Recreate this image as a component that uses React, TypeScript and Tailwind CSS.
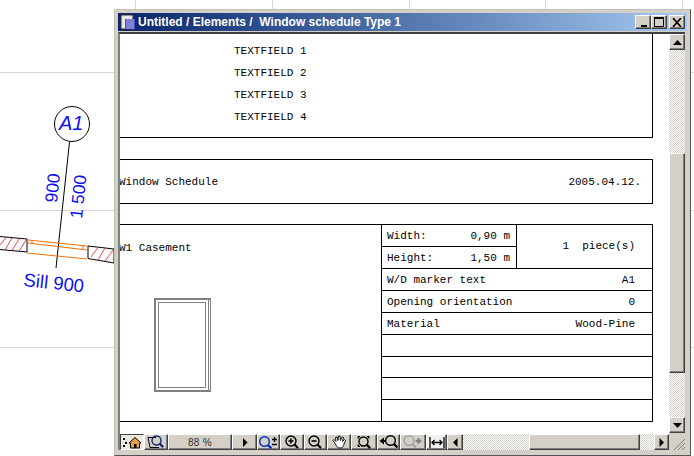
import React from "react";

const btn =
  "h-[16px] shrink-0 flex items-center justify-center bg-[#d4d0c8] border-t border-l border-t-white border-l-white border-r border-b border-r-[#404040] border-b-[#404040] shadow-[inset_-1px_-1px_0_#808080]";
const dither =
  "bg-[repeating-conic-gradient(#d4d0c8_0_25%,#ffffff_0_50%)] bg-[length:2px_2px]";

function Canvas() {
  return (
    <svg className="absolute left-0 top-0" width="694" height="456" viewBox="0 0 694 456">
      <g stroke="#d8d8d8" strokeWidth="1" shapeRendering="crispEdges">
        <path d="M0 72.5H694M0 210.5H694M0 347.5H694M135.5 0V456M272.5 0V456M409.5 0V456M545.5 0V456M682.5 0V456" />
      </g>
      <g fill="none" stroke="#000" strokeWidth="1">
        <circle cx="72" cy="124" r="17.5" fill="#fff" />
        <path d="M69.5 142L56 268" />
      </g>
      <g fill="none" stroke="#000" strokeWidth="1">
        <path d="M0 236.5L27 239V252L0 249.5M88 246L114 249V263L88 258.5V246" />
      </g>
      <g stroke="#e02020" strokeWidth="0.8">
        <path d="M0 245L6 237.5M5 250L12 238M12 250.5L19 239M19 251L26 240M91 257L98 247.5M98 260L105 248M105 261L113 250" />
      </g>
      <g stroke="#f07010" strokeWidth="1" fill="none">
        <path d="M28 240L87 246M28 243L87 250M27 253L87 259M32 240V244M83 246V250" />
      </g>
      <g fill="#1010f0" fontFamily="'Liberation Sans',sans-serif">
        <text x="59" y="130" fontSize="20" fontStyle="italic">A1</text>
        <text x="57" y="203" fontSize="17.5" transform="rotate(-84 57 203)">900</text>
        <text x="82" y="219" fontSize="17.5" transform="rotate(-84 82 219)">1 500</text>
        <text x="23" y="286" fontSize="18.5" transform="rotate(6 23 286)">Sill 900</text>
      </g>
    </svg>
  );
}

function Row({ left, right }: { left: string; right: string }) {
  return (
    <div className="h-[22px] border-b border-black flex items-center justify-between pl-[5px] pr-[17px] pt-[1px]">
      <span>{left}</span>
      <span>{right}</span>
    </div>
  );
}

function Lens({ x = 6, y = 6, r = 4.5, c = "#000" }: { x?: number; y?: number; r?: number; c?: string }) {
  return (
    <g fill="none" stroke={c} strokeWidth="1.4">
      <circle cx={x} cy={y} r={r} />
      <path d={`M${x + r * 0.7} ${y + r * 0.7}L${x + r * 0.7 + 3.5} ${y + r * 0.7 + 3.5}`} strokeWidth="2.2" />
    </g>
  );
}

function Toolbar() {
  return (
    <div className="h-[16px] shrink-0 flex items-stretch text-[11px]">
      <div className="w-[24px] h-[16px] shrink-0 flex items-center justify-center bg-[#ece9e2] border-t border-l border-t-[#404040] border-l-[#404040] border-r border-b border-r-white border-b-white">
        <svg width="20" height="13" viewBox="0 0 20 13">
          <path d="M1 2h2v2H1zM3 6h2v2H3zM1 9h2v2H1z" fill="#000" />
          <path d="M7 7L13 1.5L19 7H17.5V12H8.5V7Z" fill="#e8a040" stroke="#000" />
          <path d="M12 8h2.5v4H12z" fill="#000" />
        </svg>
      </div>
      <div className={`${btn} w-[24px]`}>
        <svg width="18" height="14" viewBox="0 0 18 14">
          <path d="M1 2.5H9M1 2.5L3 12.5H12" fill="none" stroke="#000" />
          <Lens x={9.5} y={5.5} r={4.5} c="#102a70" />
        </svg>
      </div>
      <div className={`${btn} w-[64px] text-[#303030] font-['Liberation_Sans',sans-serif] text-[10px] tracking-[0.3px]`}>88 %</div>
      <div className={`${btn} w-[25px]`}>
        <svg width="6" height="9" viewBox="0 0 6 9"><path d="M1 0L5.5 4.5L1 9Z" fill="#000" /></svg>
      </div>
      <div className={`${btn} w-[23px]`}>
        <svg width="20" height="13" viewBox="0 0 20 13">
          <Lens x={5.5} y={5.5} r={4.8} c="#0030c0" />
          <path d="M15.5 1V6M13 3.5H18M13 8.5H18" stroke="#000" strokeWidth="1.4" />
        </svg>
      </div>
      <div className={`${btn} w-[24px]`}>
        <svg width="15" height="14" viewBox="0 0 15 14">
          <Lens x={6} y={6} r={5} />
          <path d="M3.5 6H8.5M6 3.5V8.5" stroke="#000" strokeWidth="1.6" />
        </svg>
      </div>
      <div className={`${btn} w-[23px]`}>
        <svg width="15" height="14" viewBox="0 0 15 14">
          <Lens x={6} y={6} r={5} />
          <path d="M3.5 6H8.5" stroke="#000" strokeWidth="1.6" />
        </svg>
      </div>
      <div className={`${btn} w-[24px]`}>
        <svg width="15" height="14" viewBox="0 0 15 14">
          <path d="M3.5 9L1 5.5L2 4.5L4 6.5L3.5 2.5L5 2L6 5.5L6.5 1L8 1L8.5 5.5L10 2L11.5 2.5L10.5 6.5L12.5 4.5L13.5 5.5L11.5 10.5C11 12.5 10 13 8 13C5.5 13 4.5 11.5 3.5 9Z" fill="#fff" stroke="#000" strokeWidth="0.9" />
        </svg>
      </div>
      <div className={`${btn} w-[26px]`}>
        <svg width="16" height="14" viewBox="0 0 16 14">
          <Lens x={7.5} y={6.5} r={4.5} />
          <path d="M4 1.5H2V3.5M11 1.5H13V3.5M4 11.5H2V9.5" stroke="#000" />
        </svg>
      </div>
      <div className={`${btn} w-[23px]`}>
        <svg width="20" height="14" viewBox="0 0 20 14">
          <path d="M0.5 6L5 2.5V5H7V7H5V9.5Z" fill="#000" />
          <Lens x={11.5} y={5.5} r={4.8} />
        </svg>
      </div>
      <div className={`${btn} w-[26px]`}>
        <svg width="20" height="14" viewBox="0 0 20 14">
          <Lens x={6} y={5.5} r={4.8} c="#a0a0a0" />
          <path d="M19 6L14.5 2.5V5H12.5V7H14.5V9.5Z" fill="#808080" />
        </svg>
      </div>
      <div className={`${btn} w-[21px] !bg-[#f2f0ec]`}>
        <svg width="16" height="13" viewBox="0 0 16 13" fill="none" stroke="#000" strokeWidth="1.3">
          <path d="M1 1V12M15 1V12M3 6.5H13M5.5 4L3 6.5L5.5 9M10.5 4L13 6.5L10.5 9" />
        </svg>
      </div>
      <div className={`${btn} w-[16px]`}>
        <svg width="5" height="9" viewBox="0 0 5 9"><path d="M4.5 0L0 4.5L4.5 9Z" fill="#000" /></svg>
      </div>
      <div className={`flex-1 flex ${dither}`}>
        <div className="w-[66px]" />
        <div className={`${btn} w-[111px]`} />
      </div>
      <div className={`${btn} w-[15px]`}>
        <svg width="5" height="9" viewBox="0 0 5 9"><path d="M0.5 0L5 4.5L0.5 9Z" fill="#000" /></svg>
      </div>
      <div className="w-[16px] shrink-0 flex items-end justify-end bg-[#d4d0c8]">
        <svg width="14" height="14" viewBox="0 0 14 14" stroke="#808080">
          <path d="M3 14L14 3M7 14L14 7M11 14L14 11" />
        </svg>
      </div>
    </div>
  );
}

function Document() {
  return (
    <div className="flex-1 bg-white overflow-hidden relative font-['Liberation_Mono',monospace] text-[11px] leading-none text-black">
      <div className="h-[104px] w-[533px] border-r border-b border-black pl-[114px] pt-[12px] flex flex-col gap-[11px]">
        <div className="h-[11px]">TEXTFIELD 1</div>
        <div className="h-[11px]">TEXTFIELD 2</div>
        <div className="h-[11px]">TEXTFIELD 3</div>
        <div className="h-[11px]">TEXTFIELD 4</div>
      </div>
      <div className="mt-[21px] h-[45px] w-[533px] border border-l-0 border-black flex items-center justify-between pr-[11px] pt-[2px]">
        <span className="-ml-[1px]">Window Schedule</span>
        <span>2005.04.12.</span>
      </div>
      <div className="mt-[20px] h-[198px] w-[533px] border border-l-0 border-black flex">
        <div className="w-[262px] shrink-0 border-r border-black">
          <div className="mt-[18px] -ml-[1px]">W1 Casement</div>
          <div className="ml-[34px] mt-[44px] w-[57px] h-[94px] border-2 border-r-0 border-[#808080] flex">
            <div className="flex-1 my-[2px] ml-[2px] mr-[2px] border border-[#808080]" />
            <div className="w-[3px] border-l border-r border-[#808080]" />
          </div>
        </div>
        <div className="flex-1 flex flex-col">
          <div className="h-[44px] border-b border-black flex">
            <div className="w-[135px] border-r border-black">
              <div className="h-[22px] border-b border-black flex items-center justify-between px-[5px] pr-[6px] pt-[1px]">
                <span>Width:</span>
                <span>0,90 m</span>
              </div>
              <div className="h-[21px] flex items-center justify-between px-[5px] pr-[6px] pt-[1px]">
                <span>Height:</span>
                <span>1,50 m</span>
              </div>
            </div>
            <div className="flex-1 flex items-center justify-end pr-[17px] whitespace-pre">1  piece(s)</div>
          </div>
          <Row left="W/D marker text" right="A1" />
          <Row left="Opening orientation" right="0" />
          <Row left="Material" right="Wood-Pine" />
          <div className="h-[22px] border-b border-black" />
          <div className="h-[21px] border-b border-black" />
          <div className="h-[22px] border-b border-black" />
        </div>
      </div>
    </div>
  );
}

function VScroll() {
  return (
    <div className={`w-[16px] shrink-0 flex flex-col mb-[1px] ${dither}`}>
      <div className={btn}>
        <svg width="9" height="5" viewBox="0 0 9 5"><path d="M0 5L4.5 0L9 5Z" fill="#000" /></svg>
      </div>
      <div className="h-[103px]" />
      <div className={`${btn} !h-[220px]`} />
      <div className="flex-1" />
      <div className={btn}>
        <svg width="9" height="5" viewBox="0 0 9 5"><path d="M0 0L4.5 5L9 0Z" fill="#000" /></svg>
      </div>
    </div>
  );
}

export default function App() {
  return (
    <div className="relative w-[694px] h-[456px] bg-white overflow-hidden">
      <Canvas />
      <div className="absolute left-[114px] top-[9px] w-[577px] h-[447px] bg-[#d4d0c8] border border-[#c4c0b8] border-r-[#555] border-b-[#555] pt-[3px] pl-[3px] pr-[3px] pb-[5px] flex flex-col">
        <div className="h-[18px] shrink-0 flex items-center bg-gradient-to-r from-[#0a246a] to-[#a6caf0] pl-[2px] pr-[2px]">
          <svg width="16" height="16" viewBox="0 0 16 16" className="shrink-0">
            <rect x="1" y="1" width="12" height="14" fill="#e8e8e8" stroke="#333" />
            <rect x="5" y="5" width="10" height="10" fill="#5050c0" />
            <path d="M7 5V15M9 5V15M11 5V15M13 5V15" stroke="#b0b0f0" />
          </svg>
          <span className="ml-[2px] font-['Liberation_Sans',sans-serif] font-bold text-[12px] text-white whitespace-pre">Untitled / Elements /  Window schedule Type 1</span>
          <div className="ml-auto flex">
            <div className={`${btn} !h-[14px] w-[16px] items-end justify-start pl-[5px] pb-[1px]`}>
              <div className="w-[6px] h-[2px] bg-black" />
            </div>
            <div className={`${btn} !h-[14px] w-[16px]`}>
              <div className="w-[10px] h-[10px] border border-t-2 border-black" />
            </div>
            <div className={`${btn} !h-[14px] w-[16px] ml-[2px]`}>
              <svg width="10" height="9" viewBox="0 0 10 9"><path d="M1 0L9 9M9 0L1 9" stroke="#000" strokeWidth="1.7" /></svg>
            </div>
          </div>
        </div>
        <div className="flex-1 min-h-0 flex flex-col mt-[1px] mr-[2px] border-t-2 border-l-2 border-t-[#404040] border-l-[#808080]">
          <div className="flex-1 min-h-0 flex">
            <Document />
            <VScroll />
          </div>
          <Toolbar />
        </div>
      </div>
    </div>
  );
}
